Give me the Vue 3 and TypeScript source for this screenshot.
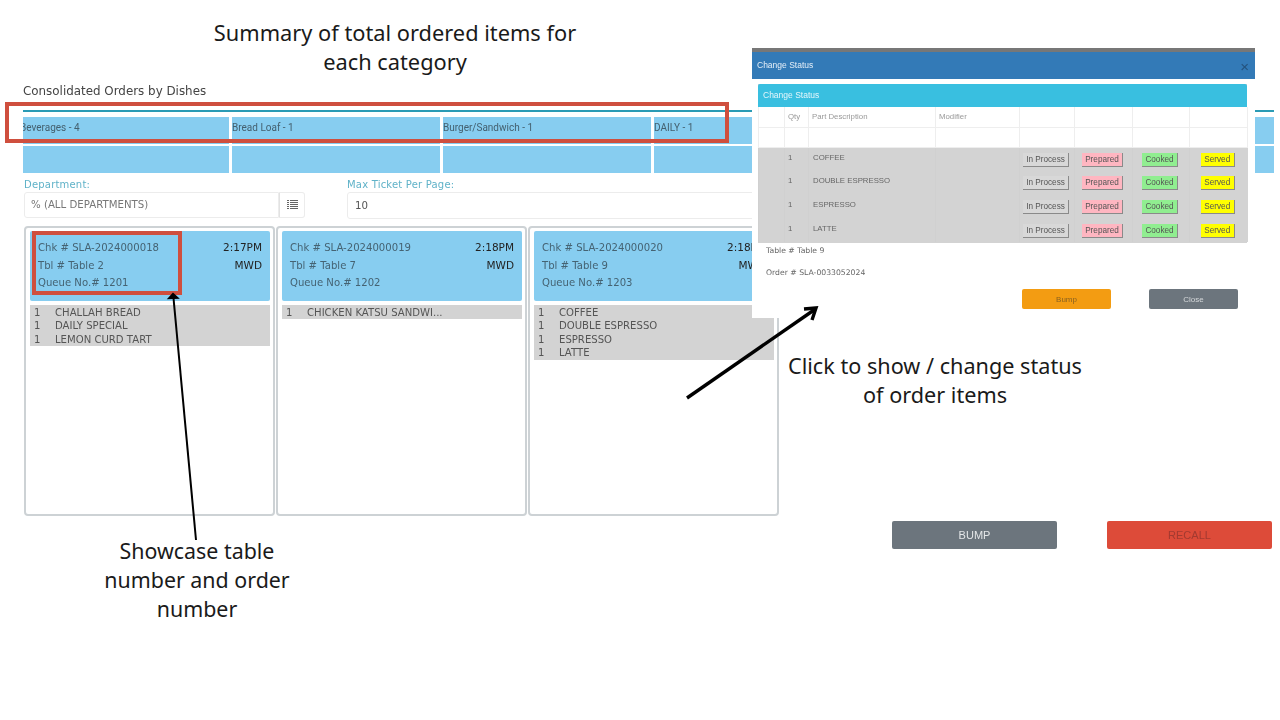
<script setup lang="ts">
interface Ticket { chk: string; tbl: string; queue: string; time: string; items: string[] }
const categories: string[] = ['Beverages - 4', 'Bread Loaf - 1', 'Burger/Sandwich - 1', 'DAILY - 1', '', '', '']
const tickets: Ticket[] = [
  { chk: 'SLA-2024000018', tbl: 'Table 2', queue: '1201', time: '2:17PM', items: ['CHALLAH BREAD', 'DAILY SPECIAL', 'LEMON CURD TART'] },
  { chk: 'SLA-2024000019', tbl: 'Table 7', queue: '1202', time: '2:18PM', items: ['CHICKEN KATSU SANDWI...'] },
  { chk: 'SLA-2024000020', tbl: 'Table 9', queue: '1203', time: '2:18PM', items: ['COFFEE', 'DOUBLE ESPRESSO', 'ESPRESSO', 'LATTE'] },
]
const rows: string[] = ['COFFEE', 'DOUBLE ESPRESSO', 'ESPRESSO', 'LATTE']
const statuses = [
  { label: 'In Process', cls: 'st-process' },
  { label: 'Prepared', cls: 'st-prepared' },
  { label: 'Cooked', cls: 'st-cooked' },
  { label: 'Served', cls: 'st-served' },
]
</script>

<template>
  <div class="slide">
    <div class="page">
      <h1 class="title">Consolidated Orders by Dishes</h1>
      <div class="rule"></div>
      <div class="cats">
        <div v-for="(c, i) in categories" :key="'c' + i" class="cat">{{ c }}</div>
        <div v-for="(c, i) in categories" :key="'e' + i" class="cat"></div>
      </div>
      <div class="filters">
        <div class="field dept">
          <label class="lbl">Department:</label>
          <div class="input-group">
            <div class="input">% (ALL DEPARTMENTS)</div>
            <div class="addon">
              <svg width="11" height="10" viewBox="0 0 11 10" fill="none" stroke="#666" stroke-width="1">
                <path d="M0 .5h2M3 .5h8M0 2.500h2M3 2.500h8M0 4.500h2M3 4.500h8M0 6.500h2M3 6.500h8M0 8.500h2M3 8.500h8" />
              </svg>
            </div>
          </div>
        </div>
        <div class="field max">
          <label class="lbl">Max Ticket Per Page:</label>
          <div class="input tall">10</div>
        </div>
      </div>
      <div class="tickets">
        <section v-for="t in tickets" :key="t.chk" class="ticket">
          <header class="t-head">
            <div class="t-left">
              <div>Chk # {{ t.chk }}</div>
              <div>Tbl # {{ t.tbl }}</div>
              <div>Queue No.# {{ t.queue }}</div>
            </div>
            <div class="t-right">
              <div>{{ t.time }}</div>
              <div>MWD</div>
            </div>
          </header>
          <ul class="t-items">
            <li v-for="it in t.items" :key="it"><span class="q">1</span><span>{{ it }}</span></li>
          </ul>
        </section>
      </div>
      <div class="actions">
        <button class="act act-bump">BUMP</button>
        <button class="act act-recall">RECALL</button>
      </div>
    </div>

    <aside class="modal">
      <div class="m-head"><span>Change Status</span><span class="m-x">×</span></div>
      <div class="panel">
        <div class="p-head">Change Status</div>
        <table class="tbl">
          <colgroup>
            <col class="c0" /><col class="c1" /><col class="c2" /><col class="c3" />
            <col class="c4" /><col class="c5" /><col class="c6" /><col class="c7" />
          </colgroup>
          <thead>
            <tr class="th-row"><th></th><th>Qty</th><th>Part Description</th><th>Modifier</th><th></th><th></th><th></th><th></th></tr>
            <tr class="th-row"><th></th><th></th><th></th><th></th><th></th><th></th><th></th><th></th></tr>
          </thead>
          <tbody>
            <tr v-for="r in rows" :key="r">
              <td class="td-plain"></td><td class="td-qty">1</td><td class="td-plain">{{ r }}</td><td class="td-plain"></td>
              <td v-for="s in statuses" :key="s.label" class="st-cell"><span class="st" :class="s.cls">{{ s.label }}</span></td>
            </tr>
          </tbody>
        </table>
      </div>
      <p class="m-info first">Table # Table 9</p>
      <p class="m-info">Order # SLA-0033052024</p>
      <div class="m-actions">
        <button class="m-btn m-bump">Bump</button>
        <button class="m-btn m-close">Close</button>
      </div>
    </aside>

    <div class="mark mark-top"></div>
    <div class="mark mark-chk"></div>

    <svg class="arrows" width="1280" height="720" viewBox="0 0 1280 720" fill="none" stroke="#000">
      <path d="M196 540 L173.500 298" stroke-width="2" />
      <path d="M168.500 298.500 L173 293.500 L178 298 Z" fill="#000" stroke-width="1.500" />
      <path d="M687 398 L814 310" stroke-width="3.400" />
      <path d="M804 309 L816 308 L812 320" stroke-width="3.400" />
    </svg>

    <p class="note note-top">Summary of total ordered items for<br />each category</p>
    <p class="note note-right">Click to show / change status<br />of order items</p>
    <p class="note note-left">Showcase table<br />number and order<br />number</p>
  </div>
</template>

<style>
html, body { margin: 0; background: #fff; }
</style>

<style scoped>
.slide {
  position: relative;
  width: 1280px;
  height: 720px;
  overflow: hidden;
  background: #fff;
}
.page {
  box-sizing: border-box;
  width: 1280px;
  padding: 84px 6px 0 23px;
  font-family: "DejaVu Sans", sans-serif;
  color: #555;
  filter: blur(0.35px);
}
.title {
  margin: 0;
  font-size: 11.900px;
  line-height: 15px;
  font-weight: 400;
  color: #444;
}
.rule { height: 2px; margin-top: 11px; background: #2b9bb5; }
.cats {
  display: grid;
  grid-template-columns: 206px repeat(6, 208px);
  grid-auto-rows: 27px;
  row-gap: 2px;
  column-gap: 3px;
  margin-top: 5px;
  height: 57px;
  overflow: hidden;
}
.cat {
  background: #87cdf0;
  font-family: Roboto, sans-serif;
  font-size: 10px;
  line-height: 21px;
  color: #44606f;
  white-space: nowrap;
  overflow: hidden;
}
.cat:first-child { text-indent: -3px; }
.filters { display: flex; gap: 42px; margin-top: 4px; padding-left: 1px; }
.field { display: flex; flex-direction: column; }
.dept { width: 281px; }
.max { width: 420px; }
.lbl { font-size: 10px; line-height: 14px; color: #5fb2c8; letter-spacing: 0.2px; }
.input-group { display: flex; height: 26px; }
.input {
  box-sizing: border-box;
  flex: 1;
  height: 26px;
  padding: 0 6px;
  border: 1px solid #ececec;
  border-radius: 3px 0 0 3px;
  font-size: 10.200px;
  line-height: 24px;
  color: #777;
}
.input.tall { height: 28px; line-height: 25px; padding-left: 7px; color: #555; }
.addon {
  box-sizing: border-box;
  width: 26px;
  border: 1px solid #ececec;
  border-left-color: #e2e2e2;
  border-radius: 0 3px 3px 0;
  display: flex;
  align-items: center;
  justify-content: center;
}
.tickets { display: flex; gap: 1px; margin-top: 7px; padding-left: 1px; }
.ticket {
  box-sizing: border-box;
  width: 251px;
  height: 290px;
  padding: 3px 3px 0 4px;
  border: 2px solid #cdd2d5;
  border-radius: 4px;
}
.t-head {
  display: flex;
  justify-content: space-between;
  box-sizing: border-box;
  height: 70px;
  padding: 8px 8px 0 8px;
  background: #87cdf0;
  border-radius: 2px;
  font-size: 10.100px;
  line-height: 17.500px;
  color: #456373;
}
.t-right { text-align: right; color: #222; font-size: 10.500px; }
.t-items {
  list-style: none;
  margin: 4px 0 0;
  padding: 0.500px 0 0;
  background: #d3d3d3;
  font-size: 10.100px;
  line-height: 13.500px;
  color: #555;
}
.t-items li { display: flex; white-space: nowrap; }
.q { width: 25px; padding-left: 4px; box-sizing: border-box; }
.actions { display: flex; justify-content: flex-end; gap: 50px; margin-top: 5px; padding-right: 2px; }
.act {
  width: 165px;
  height: 28px;
  padding: 0;
  border: 0;
  border-radius: 2px;
  font-family: "Liberation Sans", sans-serif;
  font-size: 11px;
}
.act-bump { background: #6c757d; color: #e4e6e8; }
.act-recall { background: #dd4b39; color: #a33a30; }

.modal {
  position: absolute;
  left: 752px;
  top: 48px;
  box-sizing: border-box;
  width: 503px;
  height: 270px;
  background: #fff;
  border-top: 4px solid #777;
  font-family: "Liberation Sans", sans-serif;
  filter: blur(0.35px);
}
.m-head {
  display: flex;
  justify-content: space-between;
  align-items: center;
  box-sizing: border-box;
  height: 27px;
  padding: 0 6px 2px 5px;
  background: #337ab7;
  color: #e4eef7;
  font-size: 8.500px;
}
.m-x { font-size: 15px; color: #24527c; padding-top: 3px; }
.panel { margin: 5px 8px 0 6px; padding-bottom: 1px; background: #d3d3d3; }
.p-head {
  height: 23px;
  padding-left: 5px;
  background: #39bfe0;
  border-radius: 2px 2px 0 0;
  color: #e4f6fb;
  font-size: 8.500px;
  line-height: 23px;
}
.tbl {
  width: 489px;
  table-layout: fixed;
  border-collapse: collapse;
  font-size: 7.800px;
  color: #666;
  background: #fff;
}
.c0 { width: 26px; } .c1 { width: 24px; } .c2 { width: 127px; } .c3 { width: 84px; }
.c4 { width: 55px; } .c5 { width: 58px; } .c6 { width: 57px; } .c7 { width: 58px; }
.th-row { height: 20px; }
.th-row th {
  padding: 0 0 0 3px;
  border: 1px solid #eee;
  border-top: 0;
  font-weight: 400;
  text-align: left;
  color: #999;
}
tbody tr { height: 23.800px; background: #d3d3d3; }
.td-plain { padding: 0 0 4px 4px; border-left: 1px solid #d0d0d0; }
.td-qty { padding: 0 0 4px 3px; border-left: 1px solid #d0d0d0; }
.st-cell { text-align: center; padding: 1px 2px 0 0; border-left: 1px solid #d0d0d0; }
.st {
  display: inline-block;
  padding: 0 3.500px;
  height: 13px;
  line-height: 13px;
  font-size: 8.200px;
  border-right: 1px solid #8a8a8a;
  border-bottom: 1px solid #8a8a8a;
  color: #555;
}
.st-process { background: #d8d8d8; }
.st-prepared { background: #ffb6c1; }
.st-cooked { background: #90ee90; }
.st-served { background: #ffff00; }
.m-info { margin: 0 0 0 14px; font-family: "DejaVu Sans", sans-serif; font-size: 7.700px; line-height: 10px; color: #666; }
.m-info.first { margin-top: 3px; margin-bottom: 12px; }
.m-actions { display: flex; justify-content: flex-end; gap: 38px; margin-top: 11px; padding-right: 17px; }
.m-btn {
  width: 89px;
  height: 20px;
  padding: 0;
  border: 0;
  border-radius: 2px;
  font-family: "Liberation Sans", sans-serif;
  font-size: 8px;
}
.m-bump { background: #f39c12; color: #8a6220; }
.m-close { background: #6c757d; color: #d5d8da; }

.mark { position: absolute; box-sizing: border-box; border: 4px solid #cf4f3e; }
.mark-top { left: 5px; top: 102px; width: 724px; height: 41px; }
.mark-chk { left: 32px; top: 231px; width: 150px; height: 64px; }
.arrows { position: absolute; left: 0; top: 0; }

.note {
  position: absolute;
  margin: 0;
  font-family: "Noto Sans", sans-serif;
  font-size: 21.800px;
  line-height: 29px;
  text-align: center;
  color: #1a1a1a;
  white-space: nowrap;
}
.note-top { left: 195px; width: 400px; top: 18px; }
.note-right { left: 735px; width: 400px; top: 351px; font-size: 21.650px; }
.note-left { left: -3px; width: 400px; top: 536px; font-size: 21.400px; }
</style>
